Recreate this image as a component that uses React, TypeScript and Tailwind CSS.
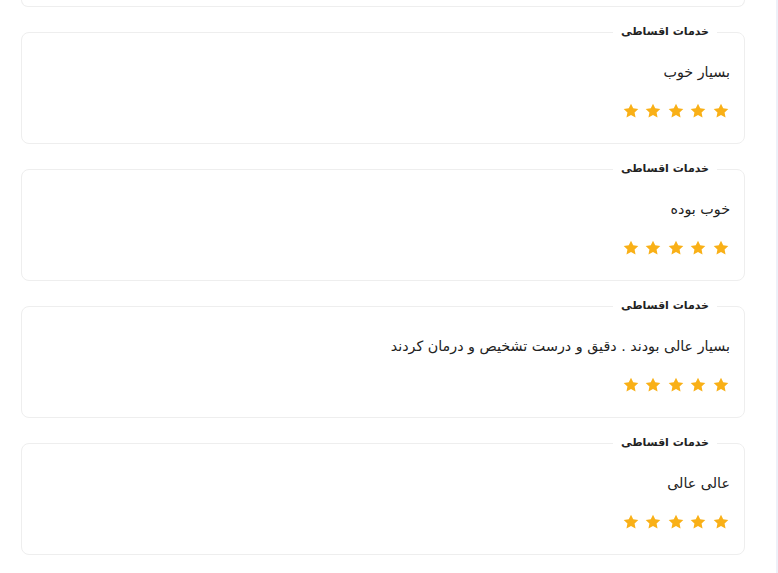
import React from "react";

const reviews = [
  { id: 1, service: "خدمات اقساطی", text: "بسیار خوب", rating: 5 },
  { id: 2, service: "خدمات اقساطی", text: "خوب بوده", rating: 5 },
  { id: 3, service: "خدمات اقساطی", text: "بسیار عالی بودند . دقیق و درست تشخیص و درمان کردند", rating: 5 },
  { id: 4, service: "خدمات اقساطی", text: "عالی عالی", rating: 5 },
];

function Star() {
  return (
    <svg width="18" height="18" viewBox="0 0 24 24" fill="#f9b017">
      <path d="M12 2.2l2.95 6.2 6.8.85-5 4.7 1.3 6.75L12 17.4l-6.05 3.3 1.3-6.75-5-4.7 6.8-.85z" />
    </svg>
  );
}

export default function App() {
  return (
    <div className="flex h-[573px] w-[778px] overflow-hidden bg-[#eef0f8]" style={{ fontFamily: '"DejaVu Sans", sans-serif' }}>
      <div dir="rtl" className="w-[776px] bg-white pr-[31px] pl-[21px]">
        <div className="space-y-[16px]">
          {/* tail of the previous card, scrolled out of view */}
          <div className="h-[7px] rounded-b-[8px] border-x border-b border-[#eeeeee]" />
          {reviews.map((r) => (
            <fieldset key={r.id} className="rounded-[8px] border border-[#eeeeee] px-[14px] pb-[23px]">
              <legend className="mr-[13px] px-[8px] text-[11px] leading-[18px] font-bold text-[#222]">{r.service}</legend>
              <p className="mt-[19px] text-[14.3px] leading-[24px] text-[#222]">{r.text}</p>
              <div className="mt-[18px] flex gap-[4.6px]">
                {Array.from({ length: r.rating }).map((_, i) => (
                  <Star key={i} />
                ))}
              </div>
            </fieldset>
          ))}
        </div>
      </div>
    </div>
  );
}
